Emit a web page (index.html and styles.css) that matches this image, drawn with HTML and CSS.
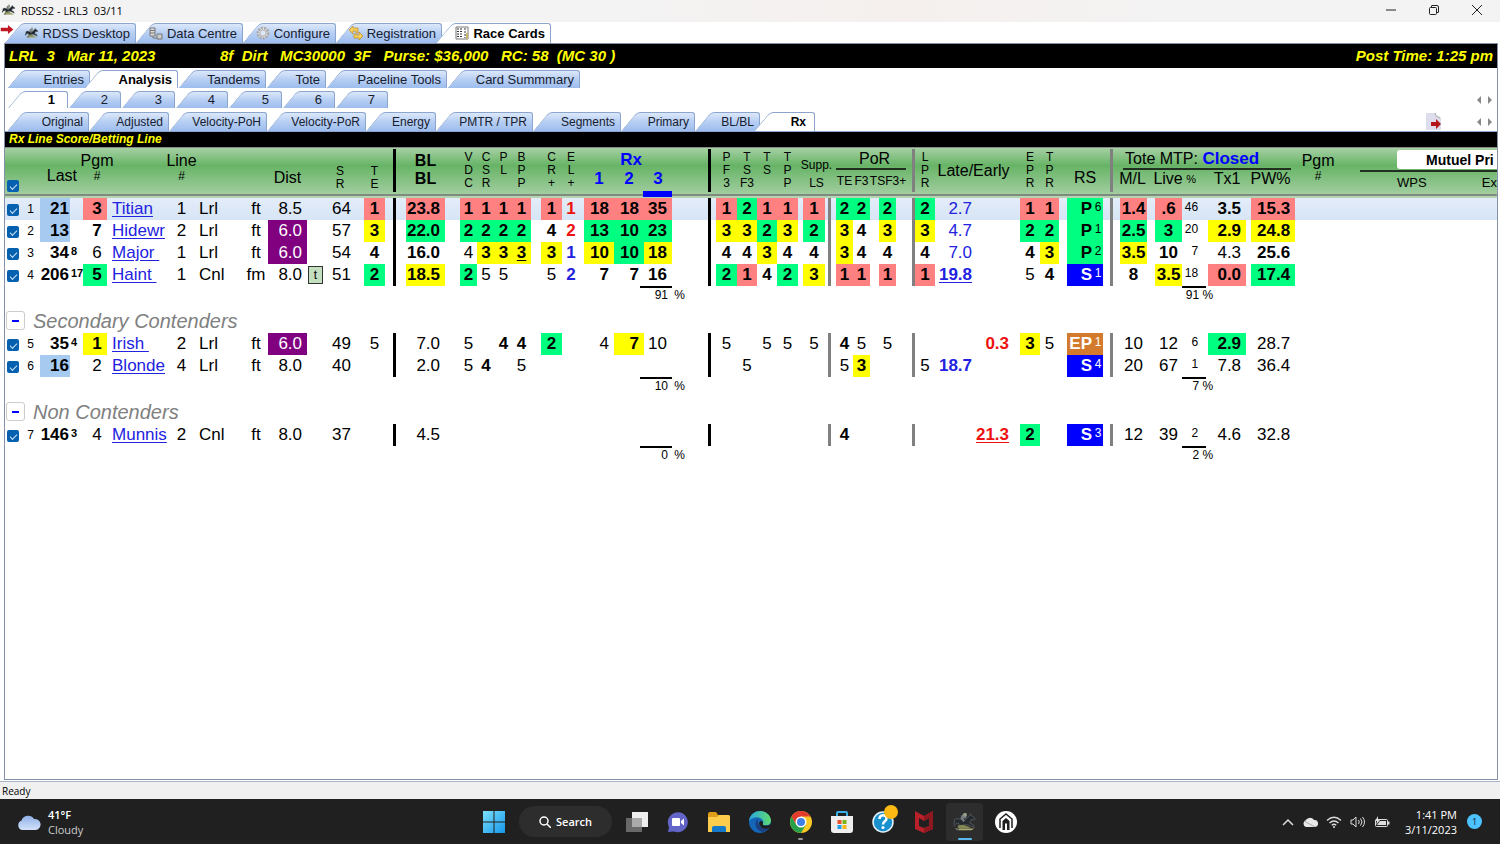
FILE: index.html
```html
<!DOCTYPE html>
<html lang="en">
<head>
<meta charset="utf-8">
<title>RDSS2 - LRL3 03/11</title>
<link rel="stylesheet" href="styles.css">
</head>
<body>
<svg class="defs" aria-hidden="true">
  <symbol id="horse" viewBox="0 0 26 20">
    <path d="M2 17h21l-3 2H5z" fill="#a9aa72"/>
    <path d="M1 8c3-2 4-2 6-1l7 0 4-4 1-2 1 2 4 3-1 2-3-1-2 4 4 2 1 3-2-1-5-2-4 0-3 2-3 3-2 0 3-4-1-3-3 1-3 3-1-1 3-4z" fill="#252a30" stroke="#6d787c" stroke-width=".6"/>
    <path d="M8 7l1-4 3-2 3 2-1 3-3 0 2 3-2 1-2-3z" fill="#747e80"/><circle cx="13" cy="2" r="2" fill="#9aa18a"/>
    <path d="M5 14l5-1 4 1 5 2-3 1H6z" fill="#858a55"/>
  </symbol>
</svg>
<div class="app">
  <header class="titlebar">
    <svg class="horse"><use href="#horse"/></svg>
    <h1>RDSS2 - LRL3&nbsp; 03/11</h1>
    <div class="winbtns">
      <button aria-label="Minimize"><svg viewBox="0 0 10 10"><path d="M0 5h10"/></svg></button>
      <button aria-label="Restore"><svg viewBox="0 0 10 10"><rect x=".5" y="2.5" width="7" height="7" rx="1"/><path d="M2.500 2.500V1q0-.5.5-.5h5q1.500 0 1.500 1.500v5q0 .5-.5.5H7.500"/></svg></button>
      <button aria-label="Close"><svg viewBox="0 0 10 10"><path d="M0 0l10 10M10 0L0 10"/></svg></button>
    </div>
  </header>

  <nav class="tabs main-tabs" aria-label="Modules">
    <svg class="arrow" viewBox="0 0 15 10"><path d="M0 3h8V0l6 5-6 5V7H0z" fill="#c01822"/></svg>
    <button><svg class="horse"><use href="#horse"/></svg>RDSS Desktop</button>
    <button><svg class="ico" viewBox="0 0 14 14"><g fill="#ddd" stroke="#777"><path d="M1 2h5v8H1zM1 4.500h5M1 7h5"/><path d="M8 8h5v5H8zM4 10v2h4" fill="#ccc"/></g></svg>Data Centre</button>
    <button><svg class="ico" viewBox="0 0 14 14"><circle cx="7" cy="7" r="5" fill="#eee" stroke="#aaa" stroke-width="3" stroke-dasharray="2 1"/><circle cx="7" cy="7" r="3" fill="#dbe6f8" stroke="#bbb"/></svg>Configure</button>
    <button><svg class="ico" viewBox="0 0 14 14"><path d="M0 4l4-4v2h5v5H7V5H4v3zM14 10l-4 4v-2H5V8h2v1h3V6z" fill="#f5cf5d" stroke="#bb8a20" stroke-width=".7"/></svg>Registration</button>
    <button class="on"><svg class="ico" viewBox="0 0 14 14"><path d="M1 1h12v12H1z" fill="#fff" stroke="#777"/><path d="M2 3h5M2 5.500h5M2 8h5M2 10.500h5M10 2v10" stroke="#333" stroke-dasharray="2 1"/><path d="M11 7h2v6h-2z" fill="#c8b96a"/></svg>Race Cards</button>
  </nav>

  <main class="panel">
    <div class="race">
      <span class="track">LRL&nbsp; 3&nbsp;&nbsp; Mar 11, 2023</span>
      <span>8f&nbsp; Dirt&nbsp;&nbsp; MC30000&nbsp; 3F&nbsp;&nbsp; Purse: $36,000&nbsp;&nbsp; RC: 58&nbsp; (MC 30 )</span>
      <span class="post">Post Time: 1:25 pm</span>
    </div>
    <nav class="tabs view-tabs" aria-label="Views">
      <button>Entries</button><button class="on">Analysis</button><button>Tandems</button><button>Tote</button><button>Paceline Tools</button><button>Card Summmary</button>
    </nav>
    <nav class="tabs race-tabs" aria-label="Races">
      <button class="on">1</button><button>2</button><button>3</button><button>4</button><button>5</button><button>6</button><button>7</button>
      <span class="scroll"><svg viewBox="0 0 16 8"><path d="M5 0v8L1 4zM12 0v8l4-4z"/></svg></span>
    </nav>
    <nav class="tabs report-tabs" aria-label="Reports">
      <button>Original</button><button>Adjusted</button><button>Velocity-PoH</button><button>Velocity-PoR</button><button>Energy</button><button>PMTR / TPR</button><button>Segments</button><button>Primary</button><button>BL/BL</button><button class="on rx">Rx</button>
      <span class="scroll"><svg class="export" viewBox="0 0 16 17"><path d="M0 0h9l6 5v12H0z" fill="#dde"/><path d="M9 0l1 3 4 2" fill="#fff" stroke="#aaa"/><path d="M5 9h5V6l5 5-5 5v-3H5z" fill="#b3151b"/></svg><svg viewBox="0 0 16 8"><path d="M5 0v8L1 4zM12 0v8l4-4z"/></svg></span>
    </nav>
    <h2 class="report-title">Rx Line Score/Betting Line</h2>

    <table class="grid">
      <colgroup>
        <col class="w19"><col class="w16"><col class="w30"><col class="w13"><col class="w24"><col class="w63"><col class="w23"><col class="w47"><col class="w28"><col class="w39">
        <col class="w17"><col class="w32"><col class="w29"><col class="w11"><col class="w49"><col class="w32"><col class="w18"><col class="w17"><col class="w19"><col class="w31">
        <col class="w18"><col class="w34"><col class="w30"><col class="w28"><col class="w39"><col class="w26"><col class="w20"><col class="w20"><col class="w21"><col class="w27">
        <col class="w6"><col class="w22"><col class="w17"><col class="w26"><col class="w19"><col class="w20"><col class="w40"><col class="w37"><col class="w28"><col class="w19">
        <col class="w34"><col class="w10"><col class="w10"><col class="w34"><col class="w35"><col class="w18"><col class="w46"><col class="w49"><col class="w46"><col>
      </colgroup>
      <thead>
        <tr>
          <th rowspan="2" class="low"><input type="checkbox" checked aria-label="Select all"></th>
          <th rowspan="2" colspan="3" class="last low">Last</th>
          <th rowspan="2" class="pgm"><span class="mid">Pgm<small>#</small></span></th>
          <th rowspan="2"></th>
          <th rowspan="2"><span class="mid">Line<small>#</small></span></th>
          <th rowspan="2"></th><th rowspan="2"></th>
          <th rowspan="2" class="low">Dist</th>
          <th rowspan="2"></th>
          <th rowspan="2" class="st low">S<br>R</th>
          <th rowspan="2" class="gap8 st low">T<br>E</th>
          <th rowspan="2" class="gap8 bar"></th>
          <th rowspan="2" class="gap10 bl">BL<br>BL</th>
          <th rowspan="2" class="gap15 st">V<br>D<br>C</th>
          <th rowspan="2" class="st">C<br>S<br>R</th>
          <th rowspan="2" class="st">P<br>L</th>
          <th rowspan="2" class="st">B<br>P<br>P</th>
          <th rowspan="2" class="gap10 st">C<br>R<br>+</th>
          <th rowspan="2" class="st">E<br>L<br>+</th>
          <th colspan="3" class="gap10 rx">Rx</th>
          <th rowspan="2" class="gap36 bar"></th>
          <th rowspan="2" class="gap5 st">P<br>F<br>3</th>
          <th rowspan="2" class="st">T<br>S<br>F3</th>
          <th rowspan="2" class="st">T<br>S</th>
          <th rowspan="2" class="st">T<br>P<br>P</th>
          <th rowspan="2" class="gap10"><span class="mid supp"><span>Supp.</span><span>LS</span></span></th>
          <th rowspan="2"></th>
          <th colspan="3" class="under por">PoR</th>
          <th rowspan="2" class="gap16 bar grey"></th>
          <th rowspan="2" class="st">L<br>P<br>R</th>
          <th rowspan="2" colspan="2" class="late"><span class="mid">Late/Early</span></th>
          <th rowspan="2" class="gap8 st">E<br>P<br>R</th>
          <th rowspan="2" class="st">T<br>P<br>R</th>
          <th rowspan="2" colspan="2" class="gap8 low">RS</th>
          <th rowspan="2" class="gap7 bar grey"></th>
          <th colspan="5" class="gap8 under tote">Tote MTP: <b>Closed</b></th>
          <th rowspan="2"><span class="mid">Pgm<small>#</small></span></th>
          <th rowspan="2" class="mutuel">
            <div class="pool"><span>Mutuel Pri</span></div>
            <div class="bets"><span>WPS</span><span>Ex</span></div>
          </th>
        </tr>
        <tr>
          <th class="gap4 rx">1</th><th class="rx">2</th><th class="rx sorted">3</th>
          <th class="gap5 sm">TE</th><th class="sm">F3</th><th class="gap10 sm"><span class="mid">TSF3+</span></th>
          <th class="gap5"><span class="mid">M/L</span></th><th class="gap7"><span class="mid">Live</span></th><th class="tiny">%</th><th class="gap8">Tx1</th><th>PW%</th>
        </tr>
      </thead>
      <tbody>
        <tr class="sel"><td><input type="checkbox" checked aria-label="Select Titian"><td>1<td class="sky b">21<td><td class="r">3<td><a href="#">Titian</a><td>1<td>Lrl<td>ft<td>8.5<td><td>64<td class="r">1<td class="bar"><td class="r">23.8<td class="r">1<td class="r">1<td class="r">1<td class="r">1<td class="r">1<td class="b red">1<td class="r">18<td class="r">18<td class="r">35<td class="bar"><td class="r">1<td class="g">2<td class="r">1<td class="r">1<td class="r">1<td class="bar grey"><td class="g">2<td class="g">2<td class="g">2<td class="bar grey"><td class="g">2<td class="blue">2.7<td><td class="r">1<td class="r">1<td class="g">P<td class="g">6<td class="bar grey"><td class="r">1.4<td class="r">.6<td>46<td class="b">3.5<td class="r">15.3<td><td></tr>
        <tr><td><input type="checkbox" checked aria-label="Select Hidewr"><td>2<td class="sky b">13<td><td class="b">7<td><a href="#">Hidewr</a><td>2<td>Lrl<td>ft<td class="p">6.0<td><td>57<td class="y">3<td class="bar"><td class="g">22.0<td class="g">2<td class="g">2<td class="g">2<td class="g">2<td class="b">4<td class="b red">2<td class="g">13<td class="g">10<td class="g">23<td class="bar"><td class="y">3<td class="y">3<td class="g">2<td class="y">3<td class="g">2<td class="bar grey"><td class="y">3<td class="b">4<td class="y">3<td class="bar grey"><td class="y">3<td class="blue">4.7<td><td class="g">2<td class="g">2<td class="g">P<td class="g">1<td class="bar grey"><td class="g">2.5<td class="g">3<td>20<td class="y">2.9<td class="y">24.8<td><td></tr>
        <tr><td><input type="checkbox" checked aria-label="Select Major"><td>3<td class="b">34<td>8<td>6<td><a href="#">Major&nbsp;</a><td>1<td>Lrl<td>ft<td class="p">6.0<td><td>54<td class="b">4<td class="bar"><td class="b">16.0<td>4<td class="y">3<td class="y">3<td class="y"><u>3</u><td class="y">3<td class="b blue">1<td class="y">10<td class="g">10<td class="y">18<td class="bar"><td class="b">4<td class="b">4<td class="y">3<td class="b">4<td class="b">4<td class="bar grey"><td class="y">3<td class="b">4<td class="b">4<td class="bar grey"><td class="b">4<td class="blue">7.0<td><td class="b">4<td class="y">3<td class="g">P<td class="g">2<td class="bar grey"><td class="y">3.5<td class="b">10<td>7<td>4.3<td class="b">25.6<td><td></tr>
        <tr><td><input type="checkbox" checked aria-label="Select Haint"><td>4<td class="b">206<td>17<td class="g">5<td><a href="#">Haint&nbsp;</a><td>1<td>Cnl<td>fm<td>8.0<td><span class="turf">t</span><td>51<td class="g">2<td class="bar"><td class="y">18.5<td class="g">2<td>5<td>5<td><td>5<td class="b blue">2<td class="b">7<td class="b">7<td class="b">16<td class="bar"><td class="g">2<td class="r">1<td class="b">4<td class="g">2<td class="y">3<td class="bar grey"><td class="r">1<td class="r">1<td class="r">1<td class="bar grey"><td class="r">1<td class="b blue"><u>19.8</u><td><td>5<td class="b">4<td class="s">S<td class="s">1<td class="bar grey"><td class="b">8<td class="y">3.5<td>18<td class="r">0.0<td class="g">17.4<td><td></tr>
        <tr class="sum"><td colspan="22"><td colspan="3" class="rxsum"><div><output>91</output> %</div><td colspan="20"><td colspan="2" class="mlsum"><div><output>91</output> %</div><td colspan="3"></tr>
      </tbody>
      <tbody>
        <tr class="section"><td colspan="50"><div><button aria-label="Collapse Secondary Contenders"></button><em>Secondary Contenders</em></div></tr>
        <tr><td><input type="checkbox" checked aria-label="Select Irish"><td>5<td class="b">35<td class="b">4<td class="y">1<td><a href="#">Irish&nbsp;</a><td>2<td>Lrl<td>ft<td class="p">6.0<td><td>49<td>5<td class="bar"><td>7.0<td>5<td><td class="b">4<td class="b">4<td class="g">2<td><td>4<td class="y">7<td>10<td class="bar"><td>5<td><td>5<td>5<td>5<td class="bar grey"><td class="b">4<td>5<td>5<td class="bar grey"><td><td><td class="b red">0.3<td class="y">3<td>5<td class="e">EP<td class="e">1<td class="bar grey"><td>10<td>12<td>6<td class="g">2.9<td>28.7<td><td></tr>
        <tr><td><input type="checkbox" checked aria-label="Select Blonde"><td>6<td class="sky b">16<td><td>2<td><a href="#">Blonde</a><td>4<td>Lrl<td>ft<td>8.0<td><td>40<td><td class="bar"><td>2.0<td>5<td class="b">4<td><td>5<td><td><td><td><td><td class="bar"><td><td>5<td><td><td><td class="bar grey"><td>5<td class="y">3<td><td class="bar grey"><td>5<td class="b blue">18.7<td><td><td><td class="s">S<td class="s">4<td class="bar grey"><td>20<td>67<td>1<td>7.8<td>36.4<td><td></tr>
        <tr class="sum"><td colspan="22"><td colspan="3" class="rxsum"><div><output>10</output> %</div><td colspan="20"><td colspan="2" class="mlsum"><div><output>7</output> %</div><td colspan="3"></tr>
      </tbody>
      <tbody>
        <tr class="section"><td colspan="50"><div><button aria-label="Collapse Non Contenders"></button><em>Non Contenders</em></div></tr>
        <tr><td><input type="checkbox" checked aria-label="Select Munnis"><td>7<td class="b">146<td>3<td>4<td><a href="#">Munnis</a><td>2<td>Cnl<td>ft<td>8.0<td><td>37<td><td class="bar"><td>4.5<td><td><td><td><td><td><td><td><td><td class="bar"><td><td><td><td><td><td class="bar grey"><td class="b">4<td><td><td class="bar grey"><td><td><td class="b red"><u>21.3</u><td class="g">2<td><td class="s">S<td class="s">3<td class="bar grey"><td>12<td>39<td>2<td>4.6<td>32.8<td><td></tr>
        <tr class="sum"><td colspan="22"><td colspan="3" class="rxsum"><div><output>0</output> %</div><td colspan="20"><td colspan="2" class="mlsum"><div><output>2</output> %</div><td colspan="3"></tr>
      </tbody>
    </table>
  </main>

  <div class="status">Ready</div>

  <footer class="taskbar">
    <div class="weather">
      <svg viewBox="0 0 24 16"><defs><linearGradient id="cl" x2="0" y2="1"><stop stop-color="#8fb0e6"/><stop offset="1" stop-color="#d3e2fb"/></linearGradient></defs><path d="M5 16a5 5 0 0 1-.5-9.500A7 7 0 0 1 17 5a5.500 5.500 0 0 1 2 11z" fill="url(#cl)"/></svg>
      <p><b>41°F</b><br>Cloudy</p>
    </div>
    <div class="apps">
      <button class="start" aria-label="Start"><svg viewBox="0 0 22 22"><defs><linearGradient id="win" x2="1" y2="1"><stop stop-color="#7be0fb"/><stop offset="1" stop-color="#1596ea"/></linearGradient></defs><path d="M0 0h10.500v10.500H0zM11.500 0H22v10.500H11.500zM0 11.500h10.500V22H0zM11.500 11.500H22V22H11.500z" fill="url(#win)"/></svg></button>
      <button class="search"><svg viewBox="0 0 12 12"><circle cx="5" cy="5" r="4" fill="none" stroke="#fff" stroke-width="1.500"/><path d="M8 8l4 4" stroke="#fff" stroke-width="1.500"/></svg>Search</button>
      <button class="app-btn" aria-label="Task view"><svg viewBox="0 0 22 22"><path d="M6 1h16v15H6z" fill="#eee"/><path d="M0 7h16v14H0z" fill="#777" opacity=".85"/><path d="M6 7h10v9H6z" fill="#aaa"/></svg></button>
      <button class="app-btn" aria-label="Chat"><svg viewBox="0 0 22 22"><path d="M1 21l1-5A10 10 0 1 1 7 20.500z" fill="#6264c7"/><rect x="5" y="7" width="8" height="8" rx="1" fill="#fff"/><path d="M14 10l3-2.500v7L14 12z" fill="#fff"/></svg></button>
      <button class="app-btn" aria-label="File Explorer"><svg viewBox="0 0 22 22"><path d="M0 3q0-2 2-2h6l2 3h10q2 0 2 2v15H0z" fill="#e09d18"/><path d="M0 6h9l2-2h9q2 0 2 2v14q0 1-1 1H1q-1 0-1-1z" fill="#fccd4d"/><path d="M4 21v-4q0-2 2-2h10q2 0 2 2v4z" fill="#1479c9"/></svg></button>
      <button class="app-btn" aria-label="Edge"><svg viewBox="0 0 22 22"><defs><linearGradient id="eg" x2="1"><stop stop-color="#2aa8e0"/><stop offset="1" stop-color="#5edb6e"/></linearGradient></defs><circle cx="11" cy="11" r="11" fill="#1467b8"/><path d="M0 10C2-3 20-3 22 9c0 5-4 6-8 5-1-1 1-2 0-4C12 5 4 5 0 10z" fill="url(#eg)"/><path d="M9 8c-5 4-2 12 5 13 3 0 6-3 7-5-5 3-11 1-12-4z" fill="#1b3f7f"/><path d="M14 14c3 1 7 1 8-2l0 3-2 2c-6 2-9-1-10-4 0-2 1-3 2-3 2 0 2 2 2 4z" fill="#202020"/></svg></button>
      <button class="app-btn run" aria-label="Chrome"><svg viewBox="0 0 22 22"><circle cx="11" cy="11" r="11" fill="#fbc926"/><path d="M1.500 5.500A11 11 0 0 1 20.500 5.500H11L6.200 13.700z" fill="#e33b2e"/><path d="M1.500 5.500A11 11 0 0 0 11 22l4.800-8.300H6.200z" fill="#26a04b"/><circle cx="11" cy="11" r="5.500" fill="#fff"/><circle cx="11" cy="11" r="4" fill="#3f7fe8"/></svg></button>
      <button class="app-btn" aria-label="Store"><svg viewBox="0 0 22 22"><path d="M6 6V2q0-1 1-1h8q1 0 1 1v4" fill="none" stroke="#37aee8" stroke-width="2"/><path d="M0 5h22v14q0 3-3 3H3q-3 0-3-3z" fill="#eee"/><path d="M6.500 9h4v4h-4z" fill="#ee5128"/><path d="M11.500 9h4v4h-4z" fill="#7cb518"/><path d="M6.500 14h4v4h-4z" fill="#1ba1e8"/><path d="M11.500 14h4v4h-4z" fill="#fcb714"/></svg></button>
      <button class="app-btn" aria-label="Get Help"><svg class="help" viewBox="0 0 26 28"><circle cx="11" cy="17" r="10" fill="#1a91cf" stroke="#e8f4fb" stroke-width="1.500"/><path d="M7.500 14c0-5 7-5 7-.5 0 3-3.500 2.500-3.500 6" fill="none" stroke="#fff" stroke-width="2.500"/><circle cx="11" cy="22.500" r="1.500" fill="#fff"/><circle cx="19" cy="7" r="7" fill="#fdb913"/></svg></button>
      <button class="app-btn" aria-label="McAfee"><svg viewBox="0 0 22 22"><path d="M2 0l9 5 9-5v18l-9 4-9-4z" fill="#b8202a"/><path d="M6 7l5 3 5-3v8l-5 2-5-2z" fill="#202020"/><path d="M11 5l9-5v18l-9 4v-5l5-2V7l-5 3z" fill="#8e1820"/></svg></button>
      <button class="app-btn current" aria-label="RDSS2"><svg viewBox="0 0 26 20"><use href="#horse"/></svg></button>
      <button class="app-btn" aria-label="Home app"><svg viewBox="0 0 22 22"><circle cx="11" cy="11" r="11" fill="#fff"/><path d="M5 17V8l6-5 6 5v9" fill="none" stroke="#202020" stroke-width="1.500"/><path d="M7.500 19V10l3.500-3 3.500 3v9h-2.500v-6l-1-1-1 1v6z" fill="#202020"/></svg></button>
    </div>
    <div class="tray">
      <svg viewBox="0 0 12 8"><path d="M1 7l5-5 5 5" fill="none" stroke="#ddd" stroke-width="1.500"/></svg>
      <svg class="cloud" viewBox="0 0 16 10"><path d="M4 10a3.500 3.500 0 0 1-.5-6.500A5 5 0 0 1 12 3a3.500 3.500 0 0 1 1 7z" fill="#e8e8e8"/><path d="M2 4l11 6" stroke="#aaa"/></svg>
      <svg class="wifi" viewBox="0 0 16 12"><path d="M1 4.500q7-6.500 14 0M3.500 7q4.500-4 9 0M5.800 9.300q2.200-2 4.400 0" fill="none" stroke="#ddd" stroke-width="1.300"/><circle cx="8" cy="11" r="1" fill="#ddd"/></svg>
      <svg class="vol" viewBox="0 0 16 12"><path d="M1 4h2l3-3v10L3 8H1zM8.500 4q1.500 2 0 4M10.500 2.500q3 3.500 0 7M12.500 1q4 5 0 10" fill="none" stroke="#ddd"/></svg>
      <svg class="bat" viewBox="0 0 16 12"><rect x="1.500" y="3.500" width="12" height="7" rx="1" fill="none" stroke="#ddd"/><path d="M3 9l3-4h6v4zM14 5.500h1.500v3H14zM4 0L1 5h2L2 9l4-5H4z" fill="#ddd"/></svg>
      <p>1:41 PM<br>3/11/2023</p>
      <span class="badge">1</span>
    </div>
  </footer>
</div>
</body>
</html>
```
FILE: styles.css
```css
* { box-sizing: border-box; }
body { margin: 0; font-family: "Liberation Sans", Arial, sans-serif; color: #000; background: #fff; }
button { font: inherit; color: inherit; border: 0; background: none; padding: 0; }
p { margin: 0; }
.defs { position: absolute; width: 0; height: 0; }
.app { display: flex; flex-direction: column; min-height: 100vh; overflow: hidden; }

/* Window title */
.titlebar { display: flex; align-items: center; height: 22px; padding: 0 18px 2px 2px; gap: 5px; background: linear-gradient(90deg, #f3f3f3 40%, #f5f0ee 60%, #f3f3f3 80%); }
.titlebar h1 { margin: 0; flex: 1; font: 11px "Open Sans", sans-serif; }
.horse { width: 14px; height: 12px; }
.winbtns { display: flex; gap: 33px; }
.winbtns button { display: flex; }
.winbtns svg { width: 10px; height: 10px; fill: none; stroke: #222; overflow: visible; }

/* Slanted tabs */
.tabs { display: grid; position: relative; font-size: 13px; color: #16202f; }
.tabs button { position: relative; isolation: isolate; display: flex; align-items: center; justify-content: flex-end; gap: 4px; padding-right: 6px; white-space: nowrap; }
.tabs button::before, .tabs button::after { content: ""; position: absolute; z-index: -1; top: 0; bottom: 0; border: 1px solid #8ba5cf; border-bottom: 0; background: linear-gradient(#dce8fa, #b6cef3 50%, #9dbdee); }
.tabs button::before { left: 8px; width: 22px; transform: skewX(-40deg); border-right: 0; border-top-left-radius: 4px; }
.tabs button::after { left: 20px; right: 0; border-left: 0; border-top-right-radius: 3px; }
.tabs .on { z-index: 1; font-weight: bold; color: #000; }
.tabs .on::before, .tabs .on::after { background: #fff; }
.tabs .on:not(:first-child)::before { left: 2px; width: 28px; }
.ico { width: 14px; height: 14px; }
.main-tabs { grid-template-columns: 131px 107px 93px 106px 109px; height: 20px; margin-top: 1px; padding-left: 5px; }
.arrow { position: absolute; left: 0; top: 2px; width: 15px; height: 9px; }
.view-tabs { grid-template-columns: 83px 88px 88px 60px 121px 133px; height: 18px; margin: 2px 0 3px; padding-left: 2px; }
.race-tabs { grid-template-columns: 61px 53px 54px 53px 54px 53px 53px 1fr; height: 17px; padding-left: 2px; }
.race-tabs button { padding-right: 13px; }
.report-tabs { grid-template-columns: 82px 80px 98px 99px 70px 97px 88px 74px 65px 55px 1fr; height: 20px; margin-top: 4px; padding-left: 2px; font-size: 12px; border-bottom: 1px solid #8ba5cf; }
.report-tabs .rx { padding-right: 9px; }
.scroll { display: flex; justify-content: flex-end; align-items: center; gap: 34px; padding-right: 5px; }
.scroll svg { width: 16px; height: 8px; fill: #888; }
.scroll .export { width: 16px; height: 17px; }

/* Race panel */
.panel { flex: 1; margin: 0 2px 0 4px; border: 1px solid #8490a8; overflow: hidden; }
.race { display: flex; height: 24px; padding: 0 4px 2px; align-items: center; background: #000; color: #ff0; font: italic bold 15px "Liberation Sans", Arial, sans-serif; white-space: nowrap; }
.track { width: 211px; }
.post { margin-left: auto; }
.report-title { margin: 0; padding: 0 4px; background: #000; color: #ff0; font: italic bold 12px/15px "Liberation Sans", Arial, sans-serif; }

/* Score grid */
.grid { width: 100%; table-layout: fixed; border-collapse: separate; border-spacing: 0; border-top: 1px solid #888; font-size: 17px; white-space: nowrap; }
.w6 { width: 6px; } .w10 { width: 10px; } .w11 { width: 11px; } .w13 { width: 13px; } .w16 { width: 16px; } .w17 { width: 17px; } .w18 { width: 18px; } .w19 { width: 19px; }
.w20 { width: 20px; } .w21 { width: 21px; } .w22 { width: 22px; } .w23 { width: 23px; } .w24 { width: 24px; } .w26 { width: 26px; } .w27 { width: 27px; } .w28 { width: 28px; } .w29 { width: 29px; }
.w30 { width: 30px; } .w31 { width: 31px; } .w32 { width: 32px; } .w34 { width: 34px; } .w35 { width: 35px; } .w37 { width: 37px; } .w39 { width: 39px; }
.w40 { width: 40px; } .w46 { width: 46px; } .w47 { width: 47px; } .w49 { width: 49px; } .w63 { width: 63px; }
th, td { padding: 0; border: 0 solid transparent; background-clip: padding-box; text-align: center; }
thead { background: linear-gradient(#a6d0a4, #67b466 35%, #a2cda0 92%, #7f8b7f 92%, #7f8b7f 96%, #b4d4b2 96%); }
thead tr:first-child { height: 22px; }
thead tr:last-child { height: 28px; }
th { font-weight: normal; font-size: 16px; line-height: 18px; vertical-align: top; padding-top: 3px; }
tr + tr th { padding-top: 0; line-height: 18px; }
th.low { vertical-align: bottom; padding-bottom: 11px; }
th.last { text-align: right; padding-right: 6px; padding-bottom: 13px; }
th.st { font-size: 12px; line-height: 13px; }
th.st.low { padding-bottom: 7px; }
th.bl { font-weight: bold; padding-top: 4px; }
th.rx { font-weight: bold; color: #00f; font-size: 17px; }
th.sm { font-size: 12px; line-height: 22px; }
th.tiny { font-size: 11px; }
.mid { display: flex; flex-direction: column; align-items: center; padding-top: 1px; }
.mid small { font-size: 12px; line-height: 12px; }
.sm .mid, tr + tr .mid { padding-top: 0; }
.supp { font-size: 12px; padding-top: 5px; }
.late .mid { padding-top: 11px; }
.pgm .mid { padding-left: 4px; }
.under { position: relative; }
.under::after { content: ""; position: absolute; left: 2px; right: 4px; bottom: 0; height: 2px; background: #223022; }
.under.por::after { right: -10px; left: 5px; }
.por { padding-left: 22px; }
.tote { text-align: left; padding-left: 4px; }
.under.por, .under.tote { padding-top: 2px; }
.tote b { color: #00f; font-size: 17px; }
.sorted { position: relative; }
.sorted::after { content: ""; position: absolute; left: -1px; right: 0; bottom: 1px; height: 6px; background: #00f; }
.mutuel { padding: 2px 0 0 19px; text-align: left; overflow: hidden; }
.pool { height: 22px; padding-left: 37px; border-bottom: 2px solid #223022; }
.pool span { display: block; height: 19px; padding-left: 29px; border-radius: 3px 0 0 3px; background: #fff; font-weight: bold; font-size: 14px; line-height: 20px; overflow: hidden; }
.bets { display: flex; gap: 55px; padding-left: 37px; font-size: 13px; line-height: 21px; }

tbody tr { height: 22px; }
td { height: 22px; line-height: 22px; }
thead .bar { padding: 1px 0 0; }
thead .bar::before { content: ""; display: block; height: 43px; background: #000; }
thead .bar.grey::before { background: #808080; }
td.bar { background-color: #000; }
td.bar.grey { background-color: #808080; }
.gap4, td:nth-child(22) { border-left-width: 4px; }
.gap5, td:nth-child(26), td:nth-child(32), td:nth-child(48), td:nth-child(30) { border-left-width: 5px; }
.gap7, td:nth-child(43), td:nth-child(44) { border-left-width: 7px; }
.gap8, td:nth-child(13), td:nth-child(14), td:nth-child(39), td:nth-child(41), td:nth-child(45), td:nth-child(47) { border-left-width: 8px; }
.gap10, td:nth-child(15), td:nth-child(20) { border-left-width: 10px; }
.gap15, td:nth-child(16) { border-left-width: 15px; }
.gap16, td:nth-child(35) { border-left-width: 16px; }
.gap36, td:nth-child(25) { border-left-width: 36px; }
td:nth-child(31) { border-left-width: 3px; }
td:nth-child(34) { border-left-width: 9px; }
td:nth-child(2) { text-align: right; padding-right: 6px; font-size: 12px; }
td:nth-child(3) { text-align: right; padding-right: 1px; }
td:nth-child(4) { text-align: left; font-size: 11px; line-height: 18px; vertical-align: top; font-weight: bold; padding-left: 1px; }
td:nth-child(5) { padding-left: 4px; }
td:nth-child(6) { text-align: left; padding-left: 5px; }
td:nth-child(8) { text-align: left; padding-left: 6px; }
td:nth-child(9) { padding-left: 4px; }
td:nth-child(10), td:nth-child(12), td:nth-child(15), td:nth-child(22), td:nth-child(23), td:nth-child(24), td:nth-child(47), td:nth-child(48) { text-align: right; padding-right: 5px; }
td:nth-child(37), td:nth-child(38) { text-align: right; padding-right: 3px; }
td:nth-child(41) { text-align: right; padding-right: 1px; }
.b, .r, .g, .y, .s, .e { font-weight: bold; }
td:nth-child(42) { font-size: 12px; font-weight: normal; line-height: 18px; vertical-align: top; }
td:nth-child(46) { text-align: right; padding-right: 2px; font-size: 12px; line-height: 18px; vertical-align: top; }
.r { background-color: #ff8080; }
.g { background-color: #00ff80; }
.y { background-color: #ff0; }
.p { background-color: #800080; color: #fff; }
.s { background-color: #00f; color: #fff; }
.e { background-color: #d47a2c; color: #fff; }
.sky { background-color: #a6caf0; }
.red { color: #e11; }
.blue, a { color: #2222e0; }
u, a { text-underline-offset: 2px; }
.sel { background: linear-gradient(#e4ecf9, #d6e5f5); }
.turf { display: block; height: 18px; margin: 0 1px; border: 1px solid #333; background: #c3dfc0; font-size: 12px; line-height: 16px; }
input[type="checkbox"] { appearance: none; display: block; position: relative; width: 12px; height: 12px; margin: 2px 0 0 2px; border-radius: 2px; background: #0560b0; }
input[type="checkbox"]::after { content: ""; position: absolute; left: 3px; top: 4px; width: 6px; height: 3px; border: solid #cfe4f6; border-width: 0 0 1px 1px; transform: rotate(-45deg); }
.low input[type="checkbox"] { margin-bottom: -5px; }

/* Group totals and headings */
.grid .sum { height: 18px; }
.grid .sum td { border: 0; height: 18px; padding: 0; line-height: 16px; font-size: 12px; font-weight: normal; text-align: left; vertical-align: top; }
.sum div { position: relative; padding-top: 1px; }
.sum div::before { content: ""; position: absolute; top: 0; left: 0; height: 2px; background: #000; }
.sum output { display: inline-block; text-align: right; }
.rxsum div { margin-left: 26px; }
.rxsum div::before { width: 32px; }
.rxsum output { width: 28px; margin-right: 3px; }
.mlsum div::before { width: 24px; }
.mlsum output { width: 17px; }
.grid .section { height: 29px; }
.section td { height: 29px; padding-left: 1px; vertical-align: top; }
.section div { display: flex; align-items: center; gap: 8px; height: 29px; padding-top: 4px; }
.section button { display: flex; align-items: center; justify-content: center; width: 19px; height: 19px; border: 1px solid #ccc; border-radius: 3px; }
.section button::before { content: ""; width: 7px; height: 2px; background: #00f; }
.section em { font-size: 20px; color: #808080; }

/* Status line and taskbar */
.status { height: 18px; margin-top: 1px; padding-left: 2px; border-top: 1px solid #a9b4c4; background: #f0f0f0; font: 10px/18px "Open Sans", sans-serif; }
.taskbar { display: grid; grid-template-columns: 1fr auto 1fr; align-items: center; height: 45px; background: #202020; color: #fff; font: 11px/15px "Open Sans", sans-serif; }
.weather { display: flex; align-items: center; gap: 7px; padding-left: 17px; color: #ccc; }
.weather svg { width: 24px; height: 16px; }
.weather b { color: #fff; font-weight: 600; }
.apps { display: flex; align-items: center; padding-left: 9px; }
.apps svg { display: block; width: 22px; height: 22px; }
.start { margin-right: 14px; }
.search { display: flex; align-items: center; justify-content: center; gap: 5px; width: 93px; height: 31px; margin-right: 4px; border-radius: 16px; background: #2d2d2d; font-weight: 600; }
.search svg { width: 12px; height: 12px; }
.app-btn { position: relative; display: flex; align-items: center; justify-content: center; width: 37px; height: 38px; margin: 0 2px; border-radius: 4px; }
.current { background: #2d2d2d; }
.apps .current svg { width: 24px; height: 24px; }
.apps .help { width: 26px; height: 28px; margin: -6px 0 0 4px; }
.run::after, .current::after { content: ""; position: absolute; bottom: 1px; width: 5px; height: 2px; border-radius: 1px; background: #999; }
.current::after { width: 14px; background: #5cb8ee; }
.tray { display: flex; align-items: center; justify-content: flex-end; gap: 8px; padding-right: 18px; }
.tray svg { width: 12px; height: 8px; }
.tray .cloud { width: 16px; height: 10px; }
.tray .wifi, .tray .vol, .tray .bat { width: 16px; height: 12px; }
.tray p { margin-left: 7px; text-align: right; }
.badge { width: 15px; height: 15px; margin-left: 2px; border-radius: 50%; background: #4cc2ff; color: #123; text-align: center; font-size: 9px; }
```
